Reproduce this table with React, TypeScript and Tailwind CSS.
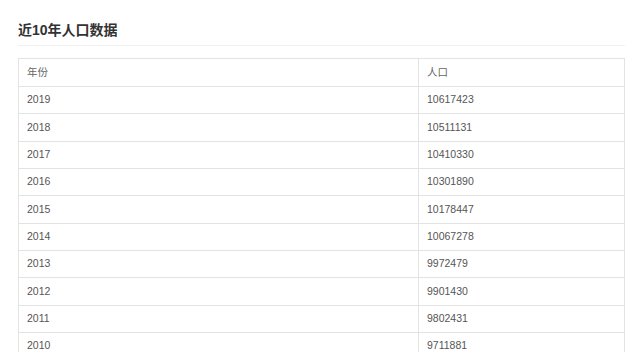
import React from "react";

const rows: [string, string][] = [
  ["2019", "10617423"],
  ["2018", "10511131"],
  ["2017", "10410330"],
  ["2016", "10301890"],
  ["2015", "10178447"],
  ["2014", "10067278"],
  ["2013", "9972479"],
  ["2012", "9901430"],
  ["2011", "9802431"],
  ["2010", "9711881"],
];

export default function App() {
  return (
    <div
      className="w-[640px] h-[352px] overflow-hidden bg-white"
      style={{ fontFamily: '"Liberation Sans", "Noto Sans CJK SC", sans-serif' }}
    >
      <div className="pl-[18px] w-[625px]">
        <div className="h-[46px] border-b border-[#f0f0f0] flex items-end pb-[8px]">
          <h1 className="text-[14px] font-bold text-[#333] leading-none">近10年人口数据</h1>
        </div>
        <div className="mt-[12px] border border-[#e3e3e3]">
          <div className="flex h-[28px] border-b border-[#e3e3e3] text-[10.5px] text-[#666]">
            <div className="w-[400px] border-r border-[#e3e3e3] pl-[8px] flex items-center">年份</div>
            <div className="flex-1 pl-[8px] flex items-center">人口</div>
          </div>
          {rows.map(([y, p]) => (
            <div key={y} className="flex h-[27.33px] border-b border-[#e3e3e3] text-[10.5px] text-[#555]">
              <div className="w-[400px] border-r border-[#e3e3e3] pl-[8px] flex items-center">{y}</div>
              <div className="flex-1 pl-[8px] flex items-center">{p}</div>
            </div>
          ))}
        </div>
      </div>
    </div>
  );
}
